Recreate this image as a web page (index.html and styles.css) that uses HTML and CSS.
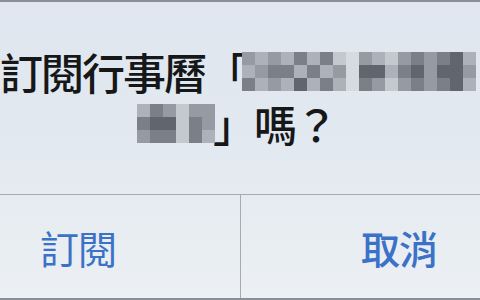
FILE: index.html
```html
<!DOCTYPE html>
<html lang="zh-Hant">
<head>
  <meta charset="UTF-8">
  <meta name="viewport" content="width=device-width, initial-scale=1.0">
  <title>訂閱行事曆</title>
  <link rel="stylesheet" href="styles.css">
</head>
<body>
  <div class="alert">
    <div class="message">
      <div class="line line-1">
        <span class="text">訂閱行事曆「</span>
        <span class="mosaic mosaic-wide">
          <i class="s3"></i><i class="s2"></i><i class="s3"></i><i class="s2"></i><i class="s4"></i><i class="s2"></i><i class="s4"></i><i class="s1"></i><i class="s0"></i><i class="s3"></i><i class="s2"></i><i class="s1"></i><i class="s3"></i><i class="s4"></i><i class="s3"></i><i class="s4"></i><i class="s5"></i><i class="s2"></i>
          <i class="s2"></i><i class="s3"></i><i class="s4"></i><i class="s4"></i><i class="s2"></i><i class="s4"></i><i class="s2"></i><i class="s3"></i><i class="s0"></i><i class="s5"></i><i class="s5"></i><i class="s2"></i><i class="s4"></i><i class="s5"></i><i class="s3"></i><i class="s5"></i><i class="s5"></i><i class="s3"></i>
          <i class="s4"></i><i class="s2"></i><i class="s3"></i><i class="s2"></i><i class="s5"></i><i class="s2"></i><i class="s4"></i><i class="s2"></i><i class="s0"></i><i class="s4"></i><i class="s3"></i><i class="s1"></i><i class="s3"></i><i class="s4"></i><i class="s3"></i><i class="s4"></i><i class="s5"></i><i class="s2"></i>
        </span>
      </div>
      <div class="line line-2">
        <span class="mosaic mosaic-short">
          <i class="s2"></i><i class="s4"></i><i class="s3"></i><i class="s1"></i><i class="s3"></i><i class="s3"></i>
          <i class="s4"></i><i class="s5"></i><i class="s5"></i><i class="s1"></i><i class="s4"></i><i class="s3"></i>
          <i class="s3"></i><i class="s4"></i><i class="s4"></i><i class="s1"></i><i class="s4"></i><i class="s2"></i>
        </span>
        <span class="text">」嗎？</span>
      </div>
    </div>

    <div class="actions">
      <button class="action action-subscribe">訂閱</button>
      <button class="action action-cancel">取消</button>
    </div>
  </div>
</body>
</html>
```

FILE: styles.css
```css
:root {
  --text-color: #161719;
  --link-color: #3b72c7;
  --divider-color: #a6abb2;
}

body {
  margin: 0;
  padding: 0;
  width: 480px;
  height: 300px;
  overflow: hidden;
  font-family: "Noto Sans CJK TC", "Noto Sans", sans-serif;
}

.alert {
  height: 300px;
  box-sizing: border-box;
  border-top: 2px solid #8a8f97;
  border-bottom: 2px solid #8a8f97;
  background: linear-gradient(to bottom, #dfe6ef 0%, #e3e9f0 50%, #ecf0f3 100%);
  display: flex;
  flex-direction: column;
}

.message {
  height: 193px;
  flex-shrink: 0;
  box-sizing: border-box;
  padding-top: 43px;
  border-bottom: 1px solid var(--divider-color);
  overflow: hidden;
}

.line {
  display: flex;
  align-items: center;
  height: 52px;
  white-space: nowrap;
  color: var(--text-color);
  font-size: 43px;
  letter-spacing: -2px;
  font-weight: 500;
}

.line-2 {
  padding-left: 137px;
}

.mosaic {
  display: grid;
  flex-shrink: 0;
  grid-auto-rows: 13px;
  filter: blur(0.6px);
}

.mosaic-wide {
  grid-template-columns: repeat(18, 13px);
  margin-left: -4px;
}

.mosaic-short {
  grid-template-columns: repeat(6, 13px);
  margin-right: -2px;
}

.mosaic i {
  display: block;
}

.s0 { background: #d6dbe2; }
.s1 { background: #c4c9d0; }
.s2 { background: #adb2ba; }
.s3 { background: #959aa3; }
.s4 { background: #7b8088; }
.s5 { background: #61656d; }

.actions {
  flex: 1;
  display: grid;
  grid-template-columns: 240px 240px;
}

.action {
  display: flex;
  align-items: center;
  box-sizing: border-box;
  margin: 0;
  padding: 0;
  border: none;
  background: transparent;
  color: var(--link-color);
  font-family: inherit;
  font-size: 39px;
  font-weight: 400;
  letter-spacing: -1px;
  cursor: pointer;
}

.action-subscribe {
  padding-left: 40px;
}

.action-cancel {
  padding-left: 120px;
  border-left: 1px solid var(--divider-color);
  font-weight: 500;
}
```
